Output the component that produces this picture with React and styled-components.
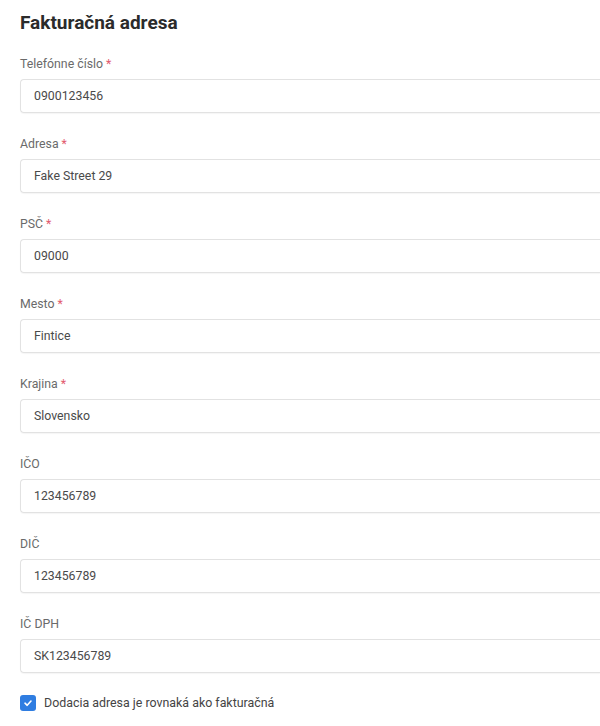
import React from "react";
import styled, { createGlobalStyle } from "styled-components";

const Global = createGlobalStyle`
  html, body { margin: 0; padding: 0; background: #fff; overflow: hidden; }
  body { font-family: Roboto, "Liberation Sans", sans-serif; }
`;

const Page = styled.div`
  width: 100%;
  padding: 10px 0 0 20px;
  box-sizing: border-box;
`;

const Title = styled.h2`
  margin: 0 0 20px;
  font-size: 19px;
  line-height: 26px;
  font-weight: 700;
  color: #2b2b2b;
`;

const Field = styled.div`
  display: flex;
  flex-direction: column;
  gap: 7px;
  margin-bottom: 23px;
`;

const Label = styled.label`
  font-size: 12.3px;
  line-height: 16px;
  color: #6a6a6a;
`;

const Req = styled.span`
  color: #e25a6e;
  margin-left: 3px;
`;

const Input = styled.div`
  height: 34px;
  box-sizing: border-box;
  border: 1px solid #e2e2e2;
  border-right: none;
  border-radius: 4px 0 0 4px;
  box-shadow: 0 1px 1px rgba(0, 0, 0, 0.04);
  padding: 0 13px;
  display: flex;
  align-items: center;
  font-size: 12.3px;
  color: #4a4a4a;
`;

const CheckRow = styled.label`
  display: flex;
  align-items: center;
  gap: 8px;
  margin-top: -1px;
  font-size: 12.4px;
  line-height: 16px;
  color: #444;
`;

const Box = styled.span`
  width: 16px;
  height: 16px;
  border-radius: 3px;
  background: #2f7de1;
  display: flex;
  align-items: center;
  justify-content: center;
`;

const fields = [
  ["Telefónne číslo", true, "0900123456"],
  ["Adresa", true, "Fake Street 29"],
  ["PSČ", true, "09000"],
  ["Mesto", true, "Fintice"],
  ["Krajina", true, "Slovensko"],
  ["IČO", false, "123456789"],
  ["DIČ", false, "123456789"],
  ["IČ DPH", false, "SK123456789"],
];

export default function App() {
  return (
    <>
      <Global />
      <Page>
        <Title>Fakturačná adresa</Title>
        {fields.map(([label, req, value]) => (
          <Field key={label}>
            <Label>
              {label}
              {req && <Req>*</Req>}
            </Label>
            <Input>{value}</Input>
          </Field>
        ))}
        <CheckRow>
          <Box>
            <svg width="10" height="10" viewBox="0 0 10 10">
              <path d="M2 5.2 L4.2 7.3 L8 3" fill="none" stroke="#fff" strokeWidth="1.6" strokeLinecap="round" strokeLinejoin="round" />
            </svg>
          </Box>
          Dodacia adresa je rovnaká ako fakturačná
        </CheckRow>
      </Page>
    </>
  );
}
